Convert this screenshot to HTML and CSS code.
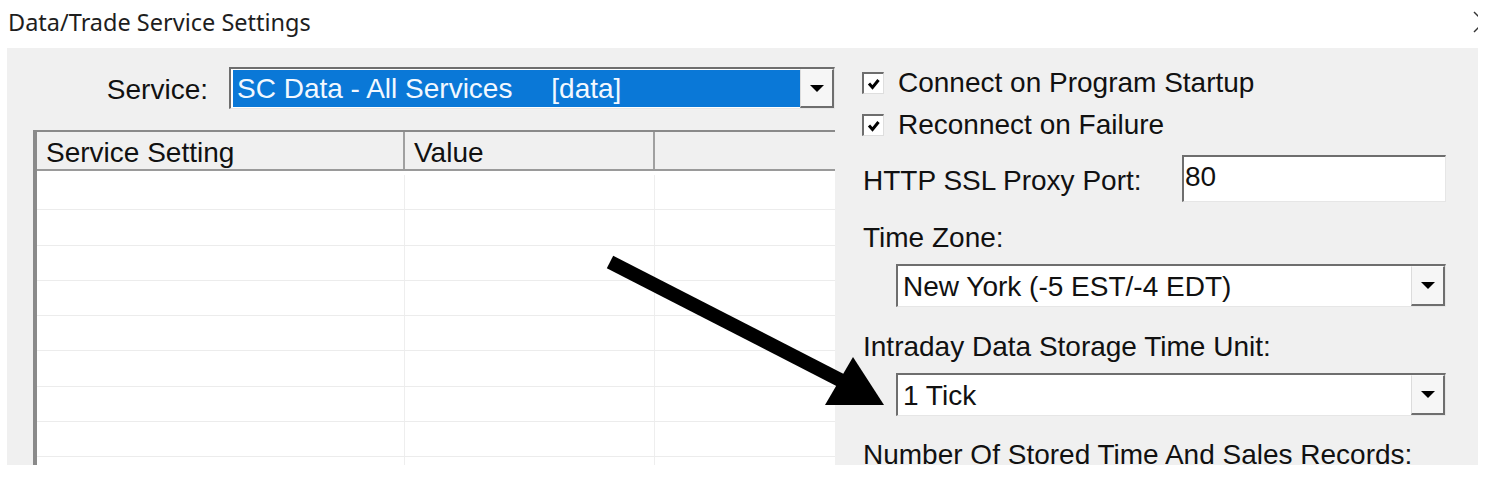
FILE: index.html
```html
<!DOCTYPE html>
<html>
<head>
<meta charset="utf-8">
<link rel="stylesheet" href="styles.css">
</head>
<body>
<div class="titlebar">
  <span class="title">Data/Trade Service Settings</span>
  <span class="close"><svg width="6" height="46" viewBox="0 0 6 46"><line x1="2" y1="12" x2="22" y2="32" stroke="#333" stroke-width="1.4"/><line x1="2" y1="32" x2="22" y2="12" stroke="#333" stroke-width="1.4"/></svg></span>
</div>
<div class="panel">
  <div class="left">
    <div class="service-row">
      <div class="service-label">Service:</div>
      <div class="combo combo-service">
        <div class="combo-value selected">SC Data - All Services     [data]</div>
        <div class="combo-btn"><span class="tri"></span></div>
      </div>
    </div>
    <div class="list">
      <div class="list-head">
        <div class="hcell c1">Service Setting</div>
        <div class="hcell c2">Value</div>
        <div class="hcell c3"></div>
      </div>
      <div class="list-body">
        <div class="row"><div class="cell c1"></div><div class="cell c2"></div><div class="cell c3"></div></div>
        <div class="row"><div class="cell c1"></div><div class="cell c2"></div><div class="cell c3"></div></div>
        <div class="row"><div class="cell c1"></div><div class="cell c2"></div><div class="cell c3"></div></div>
        <div class="row"><div class="cell c1"></div><div class="cell c2"></div><div class="cell c3"></div></div>
        <div class="row"><div class="cell c1"></div><div class="cell c2"></div><div class="cell c3"></div></div>
        <div class="row"><div class="cell c1"></div><div class="cell c2"></div><div class="cell c3"></div></div>
        <div class="row"><div class="cell c1"></div><div class="cell c2"></div><div class="cell c3"></div></div>
        <div class="row"><div class="cell c1"></div><div class="cell c2"></div><div class="cell c3"></div></div>
        <div class="row"><div class="cell c1"></div><div class="cell c2"></div><div class="cell c3"></div></div>
      </div>
    </div>
  </div>
  <div class="right">
    <div class="check-row">
      <span class="checkbox"><svg width="18" height="18" viewBox="0 0 18 18"><polyline points="4,8.5 7.5,12.5 13.5,5" fill="none" stroke="#000" stroke-width="3"/></svg></span>
      <span class="check-label">Connect on Program Startup</span>
    </div>
    <div class="check-row">
      <span class="checkbox"><svg width="18" height="18" viewBox="0 0 18 18"><polyline points="4,8.5 7.5,12.5 13.5,5" fill="none" stroke="#000" stroke-width="3"/></svg></span>
      <span class="check-label">Reconnect on Failure</span>
    </div>
    <div class="proxy-row">
      <span class="proxy-label">HTTP SSL Proxy Port:</span>
      <div class="textbox">80</div>
    </div>
    <div class="field-label tz-label">Time Zone:</div>
    <div class="combo combo-field">
      <div class="combo-value">New York (-5 EST/-4 EDT)</div>
      <div class="combo-btn"><span class="tri"></span></div>
    </div>
    <div class="field-label unit-label">Intraday Data Storage Time Unit:</div>
    <div class="combo combo-field">
      <div class="combo-value">1 Tick</div>
      <div class="combo-btn"><span class="tri"></span></div>
    </div>
    <div class="field-label records-label">Number Of Stored Time And Sales Records:</div>
  </div>
</div>
<svg class="arrow" width="1508" height="482" viewBox="0 0 1508 482">
  <line x1="610" y1="262" x2="842" y2="381" stroke="#000" stroke-width="14"/>
  <polygon points="825,405 853,357 884,405" fill="#000"/>
</svg>
</body>
</html>
```

FILE: styles.css
```css
html, body {
  margin: 0;
  padding: 0;
  background: #fff;
}
body {
  width: 1508px;
  height: 482px;
  overflow: hidden;
  position: relative;
  font-family: "Liberation Sans", Arial, sans-serif;
  color: #111;
}
.titlebar {
  display: flex;
  justify-content: space-between;
  width: 1478px;
  height: 48px;
}
.title {
  padding-left: 8px;
  font-family: "Noto Sans", "Open Sans", sans-serif;
  font-size: 23.5px;
  line-height: 44px;
  color: #1e1e1e;
}
.close {
  width: 6px;
  height: 46px;
  overflow: hidden;
}
.close svg {
  display: block;
}
.panel {
  margin-left: 7px;
  width: 1471px;
  height: 417px;
  background: #f0f0f0;
  overflow: hidden;
  display: flex;
  font-size: 28px;
}
.left {
  width: 831px;
  padding-left: 26px;
  box-sizing: border-box;
  flex: none;
}
.service-row {
  margin-top: 19px;
  display: flex;
  height: 42px;
}
.service-label {
  width: 175px;
  text-align: right;
  line-height: 38px;
  padding-top: 4px;
  height: 42px;
  box-sizing: border-box;
  margin-right: 21px;
}
.combo {
  display: flex;
  box-sizing: border-box;
  border-style: solid;
  border-width: 2px 1px 1px 2px;
  border-color: #6e6e6e #e6e6e6 #e6e6e6 #6e6e6e;
  background: #fff;
}
.combo-service {
  width: 606px;
  height: 42px;
}
.combo-value {
  flex: 1;
  white-space: pre;
  overflow: hidden;
}
.combo-service .combo-value {
  margin: 1px 0 1px 2px;
  padding: 1px 0 0 4px;
  line-height: 36px;
}
.selected {
  background: #0a78d7;
  color: #f2f8ff;
}
.combo-btn {
  width: 34px;
  flex: none;
  box-sizing: border-box;
  background: #f6f6f6;
  border-left: 1px solid #dcdcdc;
  border-top: 1px solid #fbfbfb;
  border-right: 2px solid #6e6e6e;
  border-bottom: 2px solid #6e6e6e;
  display: flex;
  align-items: center;
  justify-content: center;
}
.tri {
  width: 0;
  height: 0;
  border-left: 7px solid transparent;
  border-right: 7px solid transparent;
  border-top: 7px solid #000;
}
.list {
  margin-top: 21px;
  width: 802px;
  height: 400px;
  box-sizing: border-box;
  border-left: 4px solid #8a8a8a;
  border-top: 2px solid #8a8a8a;
  background: #fff;
}
.list-head {
  display: flex;
  height: 39px;
  box-sizing: border-box;
  background: #f0f0f0;
  border-bottom: 2px solid #9a9a9a;
}
.hcell {
  box-sizing: border-box;
  padding: 5px 0 0 9px;
  line-height: 32px;
  border-right: 2px solid #a0a0a0;
}
.c1 { width: 368px; }
.c2 { width: 250px; }
.c3 { flex: 1; }
.hcell.c3 { border-right: none; }
.list-body {
  padding-top: 4px;
}
.row {
  display: flex;
  height: 35.25px;
  box-sizing: border-box;
  border-bottom: 1px solid #ececec;
}
.cell {
  box-sizing: border-box;
  border-right: 1px solid #eeeeee;
}
.cell.c3 { border-right: none; }
.right {
  flex: 1;
  padding: 14px 0 0 24px;
  box-sizing: border-box;
}
.check-row {
  height: 42px;
  display: flex;
  align-items: center;
  line-height: 42px;
}
.checkbox {
  width: 22px;
  height: 22px;
  box-sizing: border-box;
  background: #fff;
  border-style: solid;
  border-width: 2px 1px 1px 2px;
  border-color: #6e6e6e #dedede #dedede #6e6e6e;
  display: flex;
  align-items: center;
  justify-content: center;
  margin-right: 14px;
}
.checkbox svg {
  display: block;
}
.proxy-row {
  margin-top: 9px;
  height: 47px;
  display: flex;
}
.proxy-label {
  width: 320px;
  padding-left: 1px;
  line-height: 47px;
  padding-top: 2px;
  box-sizing: border-box;
}
.textbox {
  width: 264px;
  height: 47px;
  box-sizing: border-box;
  border-style: solid;
  border-width: 2px 1px 1px 2px;
  border-color: #6e6e6e #e6e6e6 #e6e6e6 #6e6e6e;
  background: #fff;
  line-height: 32px;
  padding: 4px 0 0 1px;
}
.field-label {
  padding-left: 1px;
  line-height: 42px;
  height: 42px;
  white-space: nowrap;
}
.tz-label { margin-top: 15px; }
.unit-label { margin-top: 19px; }
.records-label { margin-top: 18px; }
.combo-field {
  margin-top: 5px;
  margin-left: 34px;
  width: 550px;
  height: 43px;
}
.combo-field .combo-value {
  padding: 2px 0 0 5px;
  line-height: 37px;
}
.arrow {
  position: absolute;
  left: 0;
  top: 0;
  pointer-events: none;
}
```
